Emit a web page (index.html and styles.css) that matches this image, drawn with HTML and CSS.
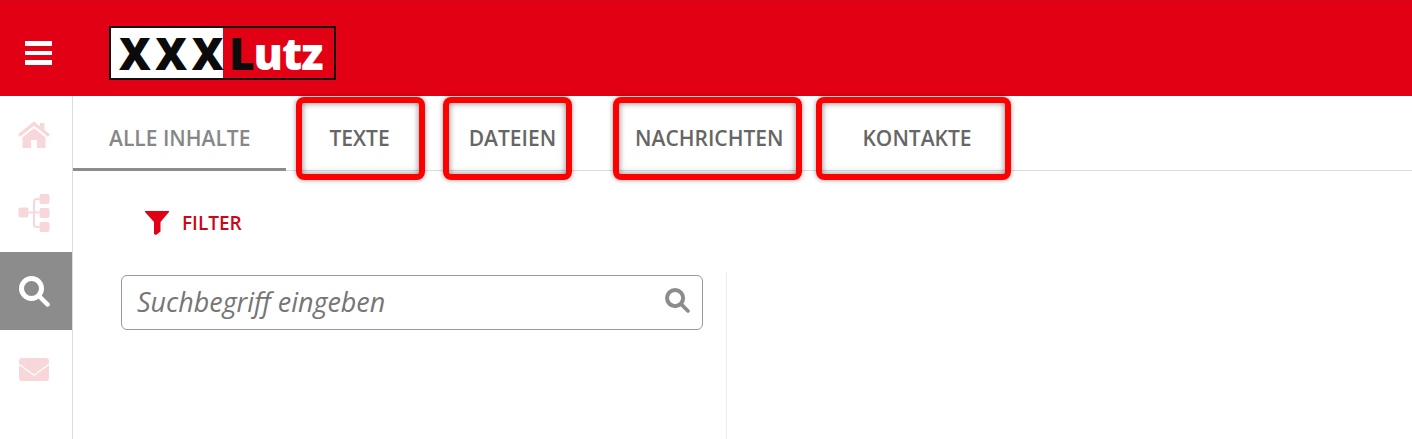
FILE: index.html
```html
<!DOCTYPE html>
<html lang="de">
<head>
<meta charset="utf-8">
<title>XXXLutz Suche</title>
<link rel="stylesheet" href="styles.css">
</head>
<body>
<header class="topbar">
  <button class="burger" aria-label="Menü"><span></span><span></span><span></span></button>
  <div class="logo"><span class="logo-white"><span class="logo-spaced">XX</span>X</span><span class="logo-red"><b>L</b>utz</span></div>
</header>
<div class="layout">
  <nav class="sidenav">
    <a class="navitem">
      <svg class="navicon" viewBox="0 0 34 28"><path class="pink" d="M17 0.5 L1 13.2 L3 15.8 L17 4.8 L31 15.8 L33 13.2 L27.5 8.8 V2 H23 V5.2 Z"/><path class="pink" d="M17 7.2 L5.5 16.2 V27 H14 V19 H20 V27 H28.5 V16.2 Z"/></svg>
    </a>
    <a class="navitem">
      <svg class="navicon" viewBox="0 0 31 38"><rect class="pink" x="0" y="13.5" width="10" height="10" rx="2"/><rect class="pink" x="21" y="0" width="10" height="10" rx="2"/><rect class="pink" x="21" y="14" width="10" height="10" rx="2"/><rect class="pink" x="21" y="28" width="10" height="10" rx="2"/><path class="pinkline" d="M10 18.5 H21 M21 5 H18 Q15.5 5 15.5 7.5 V30.5 Q15.5 33 18 33 H21"/></svg>
    </a>
    <a class="navitem active">
      <svg class="navicon searchicon" viewBox="0 0 31 31"><circle class="ring" cx="12.5" cy="12.5" r="10"/><path class="handle" d="M20 20 L28.5 28.5"/></svg>
    </a>
    <a class="navitem">
      <svg class="navicon mailicon" viewBox="0 0 30 23"><path class="pink" d="M3 0 H27 Q30 0 30 3 V5.5 L15 16.5 L0 5.5 V3 Q0 0 3 0 Z"/><path class="pink" d="M0 7 L15 18 L30 7 V20 Q30 23 27 23 H3 Q0 23 0 20 Z"/></svg>
    </a>
  </nav>
  <main class="content">
    <div class="tabs">
      <a class="tab tab-active">ALLE INHALTE</a>
      <a class="tab">TEXTE</a>
      <a class="tab">DATEIEN</a>
      <a class="tab">NACHRICHTEN</a>
      <a class="tab">KONTAKTE</a>
      <span class="mark mark-texte"></span>
      <span class="mark mark-dateien"></span>
      <span class="mark mark-nachrichten"></span>
      <span class="mark mark-kontakte"></span>
    </div>
    <div class="filter">
      <svg class="filtericon" viewBox="0 0 24 24"><path d="M0 0 H24 V1 L15.5 11 V20.5 L11 24 L9 23 V11 L0 1 Z"/></svg>
      <span>FILTER</span>
    </div>
    <section class="column">
      <div class="searchbox">
        <span class="placeholder">Suchbegriff eingeben</span>
        <svg class="boxicon" viewBox="0 0 31 31"><circle class="ring" cx="12.5" cy="12.5" r="10"/><path class="handle" d="M20 20 L28.5 28.5"/></svg>
      </div>
    </section>
  </main>
</div>
</body>
</html>
```
FILE: styles.css
```css
* { box-sizing: border-box; }
html, body { margin: 0; height: 439px; overflow: hidden; background: #fff; }
body { font-family: "Open Sans", "Liberation Sans", sans-serif; }

.topbar {
  height: 96px;
  background: #e20015;
  border-top: 1px solid #cf0a1c;
  display: flex;
  align-items: center;
  padding: 9px 0 0 25px;
}
.burger {
  width: 27px;
  display: flex;
  flex-direction: column;
  gap: 5px;
  padding: 0;
  border: 0;
  background: none;
  margin-right: 57px;
}
.burger span { display: block; height: 4.5px; width: 27px; background: #fff; }

.logo {
  width: 227px;
  height: 54px;
  border: 2px solid #111;
  display: flex;
  font-weight: 800;
  font-size: 44px;
  line-height: 50px;
  background: #e20015;
}
.logo-white {
  width: 112px;
  padding-left: 8px;
  background: #fff;
  color: #0b0b0b;
  white-space: nowrap;
}
.logo-spaced { letter-spacing: 4.5px; }
.logo-red { color: #fff; padding-left: 6px; letter-spacing: -1px; }
.logo-red b { color: #0b0b0b; font-weight: 800; }

.layout { display: flex; height: 343px; }
.sidenav { width: 73px; border-right: 1px solid #dcdcdc; flex: none; }
.navitem {
  height: 78px;
  display: flex;
  align-items: center;
  justify-content: center;
  padding-right: 4px;
}
.navitem.active { background: #8c8c8c; }
.navicon { width: 34px; height: 38px; }
.searchicon { width: 31px; height: 31px; }
.mailicon { width: 30px; height: 23px; }
.pink { fill: #f8d7da; }
.pinkline { fill: none; stroke: #f8d7da; stroke-width: 2; }
.ring { fill: none; stroke: #fff; stroke-width: 5; }
.handle { fill: none; stroke: #fff; stroke-width: 4.5; stroke-linecap: round; }

.content { flex: 1; min-width: 0; }
.tabs {
  position: relative;
  display: flex;
  gap: 7px;
  height: 75px;
  border-bottom: 1px solid #ddd;
}
.tab {
  padding: 0 36px;
  font-size: 21px;
  font-weight: 600;
  line-height: 84px;
  color: #666;
  height: 75px;
  white-space: nowrap;
}
.tab-active { color: #878787; border-bottom: 3px solid #8c8c8c; }

.mark {
  position: absolute;
  top: 1px;
  height: 83px;
  border: 6px solid #fe0000;
  border-radius: 8px;
  box-shadow: 0 0 5px rgba(0,0,0,.4), inset 0 0 6px rgba(0,0,0,.5);
}
.mark-texte { left: 223px; width: 129px; }
.mark-dateien { left: 370px; width: 129px; }
.mark-nachrichten { left: 540px; width: 189px; }
.mark-kontakte { left: 743px; width: 195px; }

.filter {
  display: flex;
  align-items: center;
  gap: 13px;
  padding-left: 72px;
  margin-top: 40px;
  height: 24px;
  font-size: 19px;
  font-weight: 600;
  color: #c8091c;
}
.filtericon { width: 24px; height: 24px; fill: #e20015; }

.column {
  width: 654px;
  height: 167px;
  margin-top: 37px;
  padding: 3px 23px 0 48px;
  border-right: 1px solid #eee;
}
.searchbox {
  height: 55px;
  border: 1px solid #999;
  border-radius: 6px;
  display: flex;
  align-items: center;
  justify-content: space-between;
  padding: 0 12px 0 15px;
}
.placeholder { font-size: 26.9px; line-height: 36px; margin-bottom: 2px; font-style: italic; color: #757575; }
.boxicon { width: 25px; height: 25px; margin-bottom: 4px; }
.boxicon .ring, .boxicon .handle { stroke: #8c8c8c; }
```
